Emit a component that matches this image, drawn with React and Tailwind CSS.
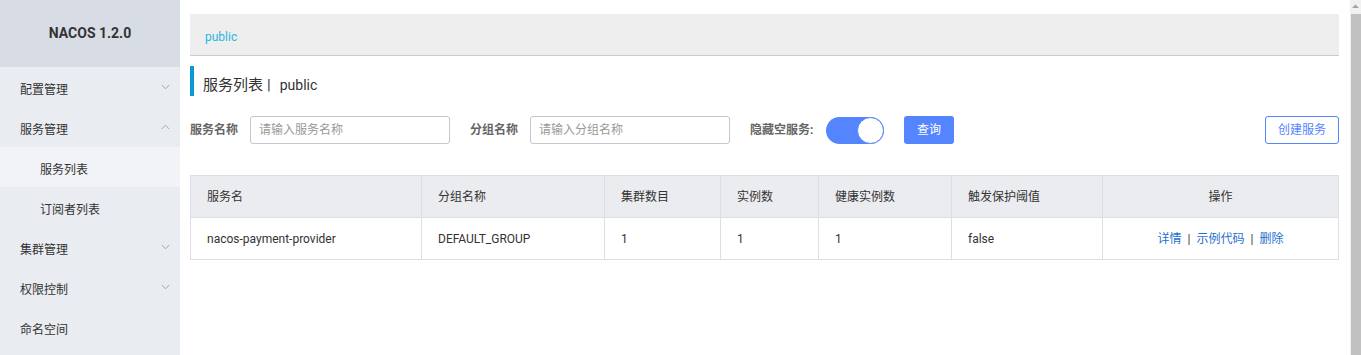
import React from "react";

const font = { fontFamily: 'Roboto, "Noto Sans CJK SC", sans-serif' };

function Chevron({ up }) {
  return (
    <svg width="9" height="6" viewBox="0 0 9 6" className="text-[#a0a6b0]">
      {up ? (
        <path d="M0.8 5 L4.5 1.2 L8.2 5" fill="none" stroke="currentColor" strokeWidth="1" />
      ) : (
        <path d="M0.8 1 L4.5 4.8 L8.2 1" fill="none" stroke="currentColor" strokeWidth="1" />
      )}
    </svg>
  );
}

function MenuItem({ label, chevron, sub, active }) {
  return (
    <div
      className={`h-10 flex items-center justify-between pr-[10px] text-[12px] text-[#333] ${
        sub ? "pl-10" : "pl-5"
      } ${active ? "bg-[#f2f3f6]" : ""}`}
    >
      <span className="pt-[5px]">{label}</span>
      {chevron && <Chevron up={chevron === "up"} />}
    </div>
  );
}

export default function App() {
  const cols = [
    ["服务名", 231],
    ["分组名称", 183],
    ["集群数目", 116],
    ["实例数", 98],
    ["健康实例数", 133],
    ["触发保护阈值", 151],
    ["操作", 236],
  ];
  const row = ["nacos-payment-provider", "DEFAULT_GROUP", "1", "1", "1", "false"];
  return (
    <div className="flex w-[1361px] h-[355px] overflow-hidden bg-white" style={font}>
      <div className="w-[180px] shrink-0 bg-[#e9ecf0] flex flex-col">
        <div className="h-[67px] bg-[#d8dde5] flex items-center justify-center text-[14px] font-bold text-[#333]">
          NACOS 1.2.0
        </div>
        <MenuItem label="配置管理" chevron="down" />
        <MenuItem label="服务管理" chevron="up" />
        <MenuItem label="服务列表" sub active />
        <MenuItem label="订阅者列表" sub />
        <MenuItem label="集群管理" chevron="down" />
        <MenuItem label="权限控制" chevron="down" />
        <MenuItem label="命名空间" />
      </div>
      <div className="flex-1 pl-[10px] pr-[11px] pt-[14px]">
        <div className="h-[42px] bg-[#eeeeee] border-b border-[#cccccc] flex items-center pl-[15px] text-[12px] text-[#2ab4e0] pt-[4px]">
          public
        </div>
        <div className="mt-[10px] h-[30px] border-l-4 border-[#0b9ad3] flex items-center pl-[9px] text-[15px] text-[#333]">
          <span className="pt-[8px] flex items-center">
            <span>服务列表</span>
            <span className="ml-[4px] mr-[9px]">|</span>
            <span className="text-[14px]">public</span>
          </span>
        </div>
        <div className="mt-[20px] flex items-center h-[28px]">
          <span className="text-[12px] font-bold text-[#666] w-[60px]">服务名称</span>
          <div className="w-[200px] h-[28px] border border-[#c4c6cf] rounded-[3px] flex items-center pl-2 text-[12px] text-[#999]">
            请输入服务名称
          </div>
          <span className="text-[12px] font-bold text-[#666] ml-[20px] w-[60px]">分组名称</span>
          <div className="w-[200px] h-[28px] border border-[#c4c6cf] rounded-[3px] flex items-center pl-2 text-[12px] text-[#999]">
            请输入分组名称
          </div>
          <span className="text-[12px] font-bold text-[#666] ml-[20px] w-[76px]">隐藏空服务:</span>
          <div className="w-[58px] h-[27px] rounded-full bg-[#5584ff] flex items-center justify-end">
            <div className="w-[27px] h-[27px] rounded-full bg-white border border-[#5584ff]" />
          </div>
          <div className="ml-[20px] w-[50px] h-[28px] rounded-[3px] bg-[#5584ff] text-white text-[12px] flex items-center justify-center">
            查询
          </div>
          <div className="flex-1" />
          <div className="w-[74px] h-[28px] rounded-[3px] border border-[#5584ff] text-[#5584ff] text-[12px] flex items-center justify-center">
            创建服务
          </div>
        </div>
        <table className="mt-[31px] w-[1148px] border-collapse text-[12px] text-[#333] table-fixed">
          <colgroup>
            {cols.map(([c, w]) => (
              <col key={c} style={{ width: w }} />
            ))}
          </colgroup>
          <thead>
            <tr className="h-[42px] bg-[#ebecf0]">
              {cols.map(([c], i) => (
                <th
                  key={c}
                  className={`border border-[#dcdee3] font-normal px-4 ${i === 6 ? "text-center" : "text-left"}`}
                >
                  {c}
                </th>
              ))}
            </tr>
          </thead>
          <tbody>
            <tr className="h-[42px]">
              {row.map((v, i) => (
                <td key={i} className="border border-[#dcdee3] px-4">
                  {v}
                </td>
              ))}
              <td className="border border-[#dcdee3] px-4 text-center">
                <span className="text-[#1f6fd0]">详情</span>
                <span className="mx-[6px]">|</span>
                <span className="text-[#1f6fd0]">示例代码</span>
                <span className="mx-[6px]">|</span>
                <span className="text-[#1f6fd0]">删除</span>
              </td>
            </tr>
          </tbody>
        </table>
      </div>
      <div className="w-[11px] shrink-0 bg-[#f1f1f1] flex flex-col items-center">
        <svg width="11" height="14" viewBox="0 0 11 14">
          <path d="M2 8 L5.5 4.5 L9 8 Z" fill="#a3a3a3" />
        </svg>
        <div className="w-[10px] flex-1 bg-[#c1c1c1]" />
      </div>
    </div>
  );
}
